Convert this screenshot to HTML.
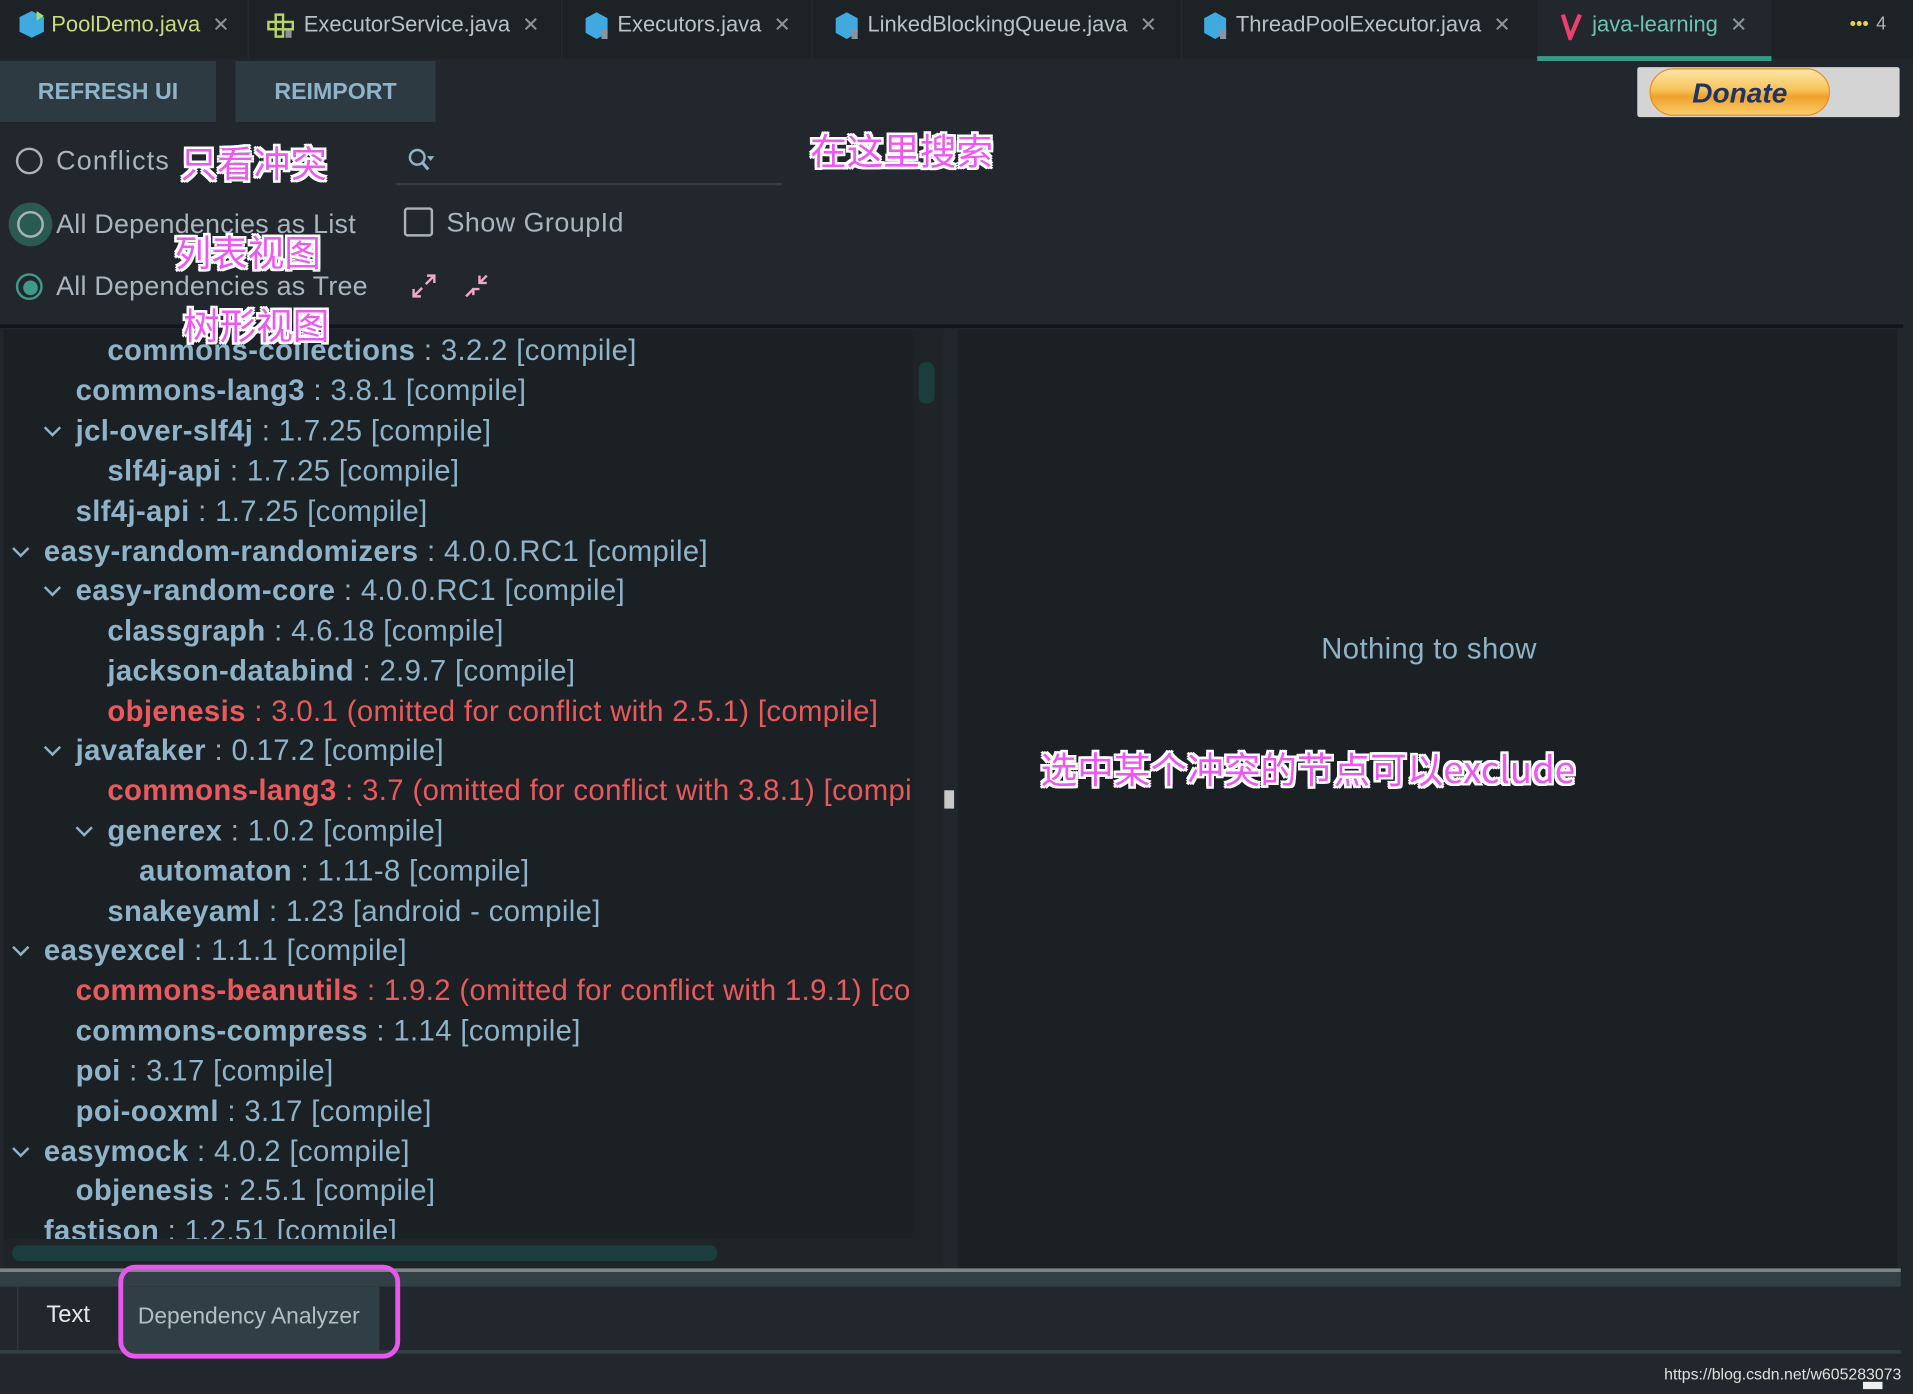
<!DOCTYPE html>
<html><head><meta charset="utf-8"><style>
html,body{margin:0;padding:0;width:1913px;height:1394px;overflow:hidden;background:#21272d}
#s{position:absolute;left:0;top:0;width:1568px;height:1143px;transform:scale(1.22003,1.2196);transform-origin:0 0;font-family:"Liberation Sans","Noto Sans CJK SC",sans-serif;color:#8fb3c8}
.a{position:absolute;white-space:nowrap}
.tabbar{position:absolute;left:0;top:0;width:1568px;height:48px;background:#1d2226}
.tab{position:absolute;top:0;height:48px;line-height:40px;font-size:18px;color:#b8c2c8}
.tab .x{color:#8a949a;margin-left:10px;font-size:17px}
.sep{position:absolute;top:0;width:1px;height:48px;background:#262c30}
.btn{position:absolute;top:50px;height:50px;background:#2e3a42;color:#8fb3c8;font-weight:bold;font-size:19px;line-height:52px;text-align:center}
.rad{position:absolute;width:22px;height:22px;border:2px solid #aab3ba;border-radius:50%;box-sizing:border-box}
.lbl{position:absolute;font-size:22px;color:#aab6bf;white-space:nowrap}
.ann{position:absolute;white-space:nowrap;color:#ee58f2;font-size:30px;font-family:"Noto Sans CJK SC",sans-serif;text-shadow:2px 0 #fff,-2px 0 #fff,0 2px #fff,0 -2px #fff,2px 2px #fff,-2px -2px #fff,2px -2px #fff,-2px 2px #fff}
.panel{position:absolute;background:#1b2024}
.r{position:absolute;font-size:24px;letter-spacing:0.3px;white-space:nowrap;line-height:26px}
.r b{color:#8fb3c8}
.r.red,.r.red b{color:#ea5a5c}
.chev{position:absolute;width:8px;height:8px;border-right:2px solid #8fb3c8;border-bottom:2px solid #8fb3c8;transform:rotate(45deg)}
</style></head><body><div id="s">
<div class="tabbar"></div>
<svg class="a" style="left:14px;top:7px" width="24" height="26" viewBox="0 0 24 26"><path d="M12 2 L22 7 L22 19 L12 24 L2 19 L2 7 Z" fill="#3fa9e0"/><path d="M16 2 L22 6 L16 10Z" fill="#9ee06a"/></svg>
<div class="tab" style="left:42px;color:#c6dc7e">PoolDemo.java<span class="x">✕</span></div>
<div class="sep" style="left:203px"></div>
<svg class="a" style="left:218px;top:10px" width="26" height="22"><rect x="2" y="8" width="20" height="6" fill="none" stroke="#b6d46a" stroke-width="2"/><rect x="8" y="2" width="6" height="18" fill="none" stroke="#b6d46a" stroke-width="2"/><rect x="16" y="15" width="5" height="6" fill="#8a949a"/></svg>
<div class="tab" style="left:249px">ExecutorService.java<span class="x">✕</span></div>
<div class="sep" style="left:460px"></div>
<svg class="a" style="left:478px;top:8px" width="24" height="26"><path d="M11 2 L20 7 L20 19 L11 24 L2 19 L2 7 Z" fill="#3fa9e0"/><rect x="15" y="16" width="5" height="8" fill="#8a949a"/></svg>
<div class="tab" style="left:506px">Executors.java<span class="x">✕</span></div>
<div class="sep" style="left:665px"></div>
<svg class="a" style="left:683px;top:8px" width="24" height="26"><path d="M11 2 L20 7 L20 19 L11 24 L2 19 L2 7 Z" fill="#3fa9e0"/><rect x="15" y="16" width="5" height="8" fill="#8a949a"/></svg>
<div class="tab" style="left:711px">LinkedBlockingQueue.java<span class="x">✕</span></div>
<div class="sep" style="left:968px"></div>
<svg class="a" style="left:985px;top:8px" width="24" height="26"><path d="M11 2 L20 7 L20 19 L11 24 L2 19 L2 7 Z" fill="#3fa9e0"/><rect x="15" y="16" width="5" height="8" fill="#8a949a"/></svg>
<div class="tab" style="left:1013px">ThreadPoolExecutor.java<span class="x">✕</span></div>
<div class="a" style="left:1260px;top:0;width:192px;height:48px;background:#21272d"></div>
<div class="a" style="left:1260px;top:46px;width:192px;height:4px;background:#3a9a88"></div>
<svg class="a" style="left:1278px;top:9px" width="20" height="24"><path d="M3 3 L9 22 L17 3" fill="none" stroke="#ef3f6a" stroke-width="3.5"/></svg>
<div class="tab" style="left:1305px;color:#6ec4b4">java-learning<span class="x">✕</span></div>
<div class="tab" style="left:1516px;color:#e6d23a;font-size:15px">•••<span style="color:#aab6bf;margin-left:6px">4</span></div>

<div class="btn" style="left:0;width:177px">REFRESH UI</div>
<div class="btn" style="left:193px;width:164px">REIMPORT</div>
<div class="a" style="left:1342px;top:55px;width:215px;height:41px;background:#d4d4d4;border-radius:2px"></div>
<div class="a" style="left:1352px;top:56px;width:148px;height:39px;border-radius:20px;background:linear-gradient(#fde6a8,#f8c35a 45%,#f0a22a 60%,#f9cc6a);border:1px solid #e89022;box-sizing:border-box;text-align:center;font-style:italic;font-weight:bold;font-size:23px;line-height:38px;color:#1b3569">Donate</div>

<div class="rad" style="left:13px;top:121px"></div>
<div class="lbl" style="left:46px;top:119px;letter-spacing:1px">Conflicts</div>
<div class="a" style="left:7px;top:166px;width:36px;height:36px;border-radius:50%;background:#2a5a52"></div>
<div class="rad" style="left:14px;top:173px;border-color:#a8b4b8"></div>
<div class="lbl" style="left:46px;top:171px;letter-spacing:0.2px">All Dependencies as List</div>
<div class="rad" style="left:13px;top:224px;border-color:#3d9a88"></div>
<div class="a" style="left:19px;top:230px;width:12px;height:12px;border-radius:50%;background:#3d9a88"></div>
<div class="lbl" style="left:46px;top:222px;letter-spacing:0.2px">All Dependencies as Tree</div>

<svg class="a" style="left:333px;top:120px" width="26" height="24"><circle cx="9" cy="9" r="6" fill="none" stroke="#8fb3c8" stroke-width="2"/><path d="M13 13 L18 19" stroke="#8fb3c8" stroke-width="2.5"/><path d="M17 8 L23 8 L20 12Z" fill="#8fb3c8"/></svg>
<div class="a" style="left:325px;top:150px;width:316px;height:2px;background:#333d44"></div>
<div class="a" style="left:331px;top:170px;width:24px;height:24px;border:2px solid #a8b2b8;border-radius:3px;box-sizing:border-box"></div>
<div class="lbl" style="left:366px;top:170px;letter-spacing:0.4px">Show GroupId</div>
<svg class="a" style="left:336px;top:223px" width="70" height="24"><g stroke="#f0a8c8" stroke-width="2" fill="none"><path d="M3 20 L10 13 M3 14 L3 20 L9 20"/><path d="M20 3 L13 10 M14 3 L20 3 L20 9"/><path d="M46 20 L52 14 M52 19 L52 14 L57 14"/><path d="M63 3 L57 9 M57 3 L57 9 L63 9"/></g></svg>

<div class="a" style="left:0;top:266px;width:1560px;height:3px;background:#12161a"></div>
<div class="panel" style="left:3px;top:270px;width:745px;height:746px;overflow:hidden">
<div style="position:relative;left:-3px;top:-270px">
<div class="r" style="left:88px;top:275px"><b>commons-collections</b> : 3.2.2 [compile]</div>
<div class="r" style="left:62px;top:308px"><b>commons-lang3</b> : 3.8.1 [compile]</div>
<div class="chev" style="left:38px;top:346px"></div>
<div class="r" style="left:62px;top:341px"><b>jcl-over-slf4j</b> : 1.7.25 [compile]</div>
<div class="r" style="left:88px;top:374px"><b>slf4j-api</b> : 1.7.25 [compile]</div>
<div class="r" style="left:62px;top:407px"><b>slf4j-api</b> : 1.7.25 [compile]</div>
<div class="chev" style="left:12px;top:445px"></div>
<div class="r" style="left:36px;top:440px"><b>easy-random-randomizers</b> : 4.0.0.RC1 [compile]</div>
<div class="chev" style="left:38px;top:477px"></div>
<div class="r" style="left:62px;top:472px"><b>easy-random-core</b> : 4.0.0.RC1 [compile]</div>
<div class="r" style="left:88px;top:505px"><b>classgraph</b> : 4.6.18 [compile]</div>
<div class="r" style="left:88px;top:538px"><b>jackson-databind</b> : 2.9.7 [compile]</div>
<div class="r red" style="left:88px;top:571px"><b>objenesis</b> : 3.0.1 (omitted for conflict with 2.5.1) [compile]</div>
<div class="chev" style="left:38px;top:608px"></div>
<div class="r" style="left:62px;top:603px"><b>javafaker</b> : 0.17.2 [compile]</div>
<div class="r red" style="left:88px;top:636px"><b>commons-lang3</b> : 3.7 (omitted for conflict with 3.8.1) [compile]</div>
<div class="chev" style="left:64px;top:674px"></div>
<div class="r" style="left:88px;top:669px"><b>generex</b> : 1.0.2 [compile]</div>
<div class="r" style="left:114px;top:702px"><b>automaton</b> : 1.11-8 [compile]</div>
<div class="r" style="left:88px;top:735px"><b>snakeyaml</b> : 1.23 [android - compile]</div>
<div class="chev" style="left:12px;top:772px"></div>
<div class="r" style="left:36px;top:767px"><b>easyexcel</b> : 1.1.1 [compile]</div>
<div class="r red" style="left:62px;top:800px"><b>commons-beanutils</b> : 1.9.2 (omitted for conflict with 1.9.1) [compile]</div>
<div class="r" style="left:62px;top:833px"><b>commons-compress</b> : 1.14 [compile]</div>
<div class="r" style="left:62px;top:866px"><b>poi</b> : 3.17 [compile]</div>
<div class="r" style="left:62px;top:899px"><b>poi-ooxml</b> : 3.17 [compile]</div>
<div class="chev" style="left:12px;top:937px"></div>
<div class="r" style="left:36px;top:932px"><b>easymock</b> : 4.0.2 [compile]</div>
<div class="r" style="left:62px;top:964px"><b>objenesis</b> : 2.5.1 [compile]</div>
<div class="r" style="left:36px;top:997px"><b>fastjson</b> : 1.2.51 [compile]</div>
</div></div>
<div class="a" style="left:748px;top:270px;width:25px;height:746px;background:#1e2428"></div>
<div class="a" style="left:753px;top:297px;width:13px;height:34px;border-radius:6px;background:#1b3d3e"></div>
<div class="a" style="left:3px;top:1016px;width:770px;height:24px;background:#1e2428"></div>
<div class="a" style="left:10px;top:1021px;width:578px;height:13px;border-radius:6px;background:#1b3d3e"></div>
<div class="a" style="left:774px;top:648px;width:8px;height:15px;background:#c8c8c8"></div>
<div class="panel" style="left:785px;top:270px;width:770px;height:770px"></div>
<div class="a" style="left:1083px;top:519px;font-size:24px;letter-spacing:0.3px;color:#8fb3c8">Nothing to show</div>
<div class="a" style="left:0;top:1040px;width:1558px;height:3px;background:#7d8488"></div>
<div class="a" style="left:0;top:1043px;width:1558px;height:12px;background:#323f44"></div>
<div class="a" style="left:0;top:1055px;width:1558px;height:52px;background:#21272d"></div>
<div class="a" style="left:14px;top:1055px;width:1px;height:52px;background:#323a3f"></div>
<div class="a" style="left:38px;top:1067px;font-size:19.5px;color:#e6e9eb">Text</div>
<div class="a" style="left:101px;top:1055px;width:210px;height:52px;background:#2f3f45"></div>
<div class="a" style="left:113px;top:1068px;font-size:18.7px;color:#b4bec3">Dependency Analyzer</div>
<div class="a" style="left:0;top:1107px;width:1558px;height:3px;background:#323f44"></div>
<div class="a" style="left:97px;top:1037px;width:231px;height:77px;border:4px solid #e856ee;border-radius:14px;box-sizing:border-box"></div>
<div class="a" style="left:1364px;top:1119px;font-size:13px;color:#e0e0e0">https://blog.csdn.net/w605283073</div>
<div class="a" style="left:1527px;top:1133px;width:16px;height:6px;background:#eee"></div>

<div class="ann" style="left:148px;top:110px">只看冲突</div>
<div class="ann" style="left:664px;top:100px">在这里搜索</div>
<div class="ann" style="left:143px;top:183px">列表视图</div>
<div class="ann" style="left:150px;top:243px">树形视图</div>
<div class="ann" style="left:853px;top:607px">选中某个冲突的节点可以exclude</div>
</div></body></html>
